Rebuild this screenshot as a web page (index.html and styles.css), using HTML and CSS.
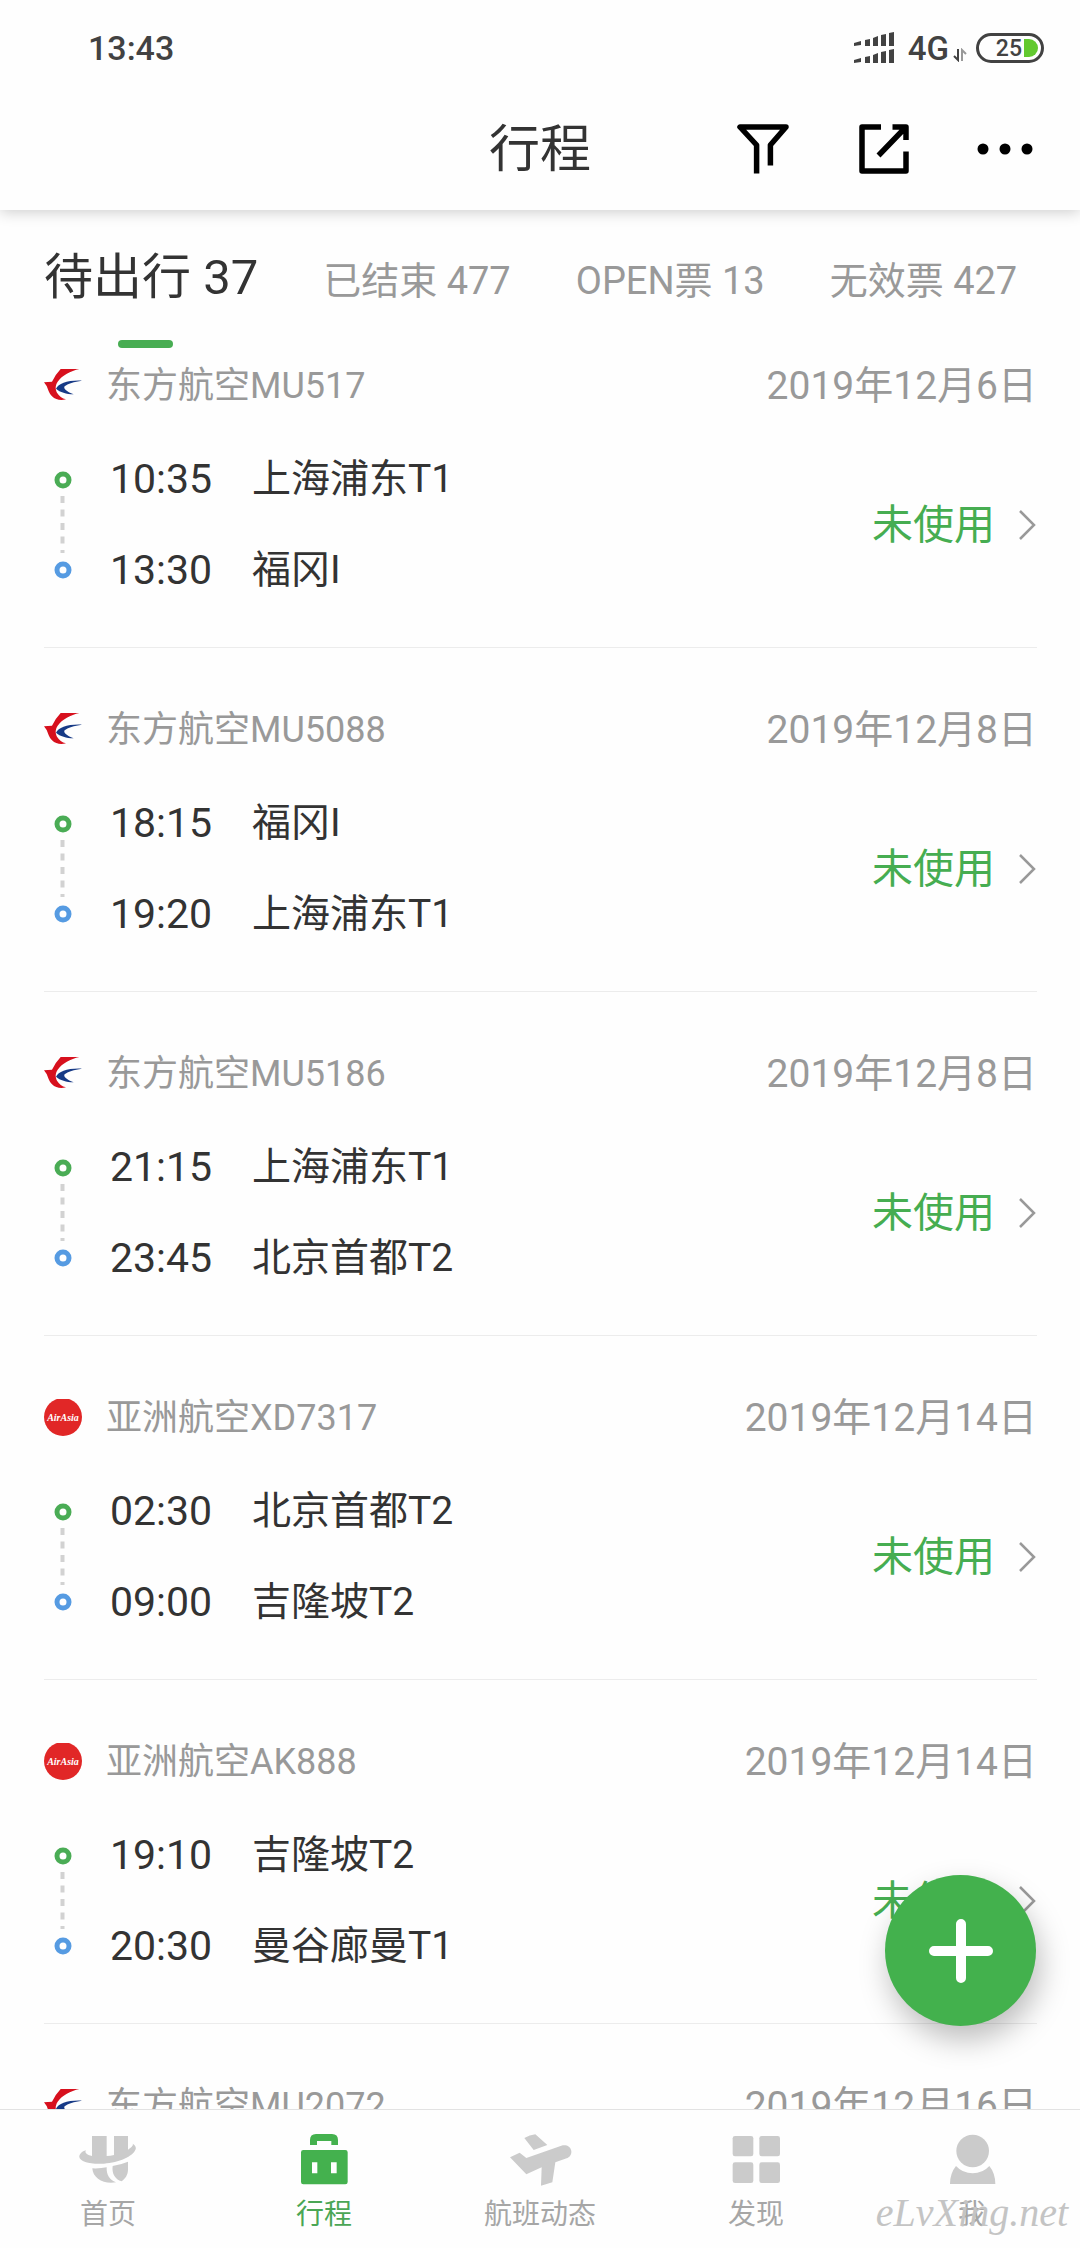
FILE: index.html
```html
<!DOCTYPE html>
<html lang="zh-CN">
<head>
<meta charset="utf-8">
<meta name="viewport" content="width=device-width">
<title>行程</title>
<link rel="stylesheet" href="styles.css">
</head>
<body>
<svg class="defs" aria-hidden="true">
  <symbol id="mu" viewBox="42 51 114 114">
    <path fill="#d7101d" d="M92 57h56C122 63 96 76 83 95c-8 13-7 22-2 33 6 10 15 17 27 20-15 4-31 2-42-9-9-9-12-21-16-31l-8-11 24-2q9-20 26-38z"/>
    <path fill="#173a86" d="M156 92c-24 3-43 9-52 17-5 6 5 16 27 24-22-1-41-6-53-17 8-15 35-26 78-24z"/>
  </symbol>
  <symbol id="airasia" viewBox="0 0 38 38">
    <circle cx="19" cy="18" r="19" fill="#e12727"/>
    <text class="airasia-text" x="19" y="22" text-anchor="middle">AirAsia</text>
  </symbol>
  <symbol id="chevron" viewBox="0 0 18 30">
    <path d="M1 1l14 14L1 29" fill="none" stroke="#999" stroke-width="2.5"/>
  </symbol>
  <symbol id="route" viewBox="0 0 18 108">
    <circle cx="9" cy="9" r="6" fill="#fff" stroke="#4aac55" stroke-width="5"/>
    <path d="M8.500 25v57" stroke="#d2d2d2" stroke-width="4" stroke-dasharray="7 6.500"/>
    <circle cx="9" cy="99" r="6" fill="#fff" stroke="#569be2" stroke-width="5"/>
  </symbol>
</svg>

<div class="statusbar">
  <span class="clock">13:43</span>
  <svg class="signal" width="40" height="32" viewBox="0 0 40 32" fill="#424242">
    <path d="M0 11l7-2v4l-7 1zM11 8l5-1v7h-5zM19 6l5-2v10h-5zM27 3l5-1v12h-5zM35 1l5-1v14h-5z"/>
    <path d="M0 28l7-2v4l-7 1zM11 25l5-1v7h-5zM19 23l5-2v10h-5zM27 20l5-1v12h-5zM35 18l5-1v14h-5z"/>
  </svg>
  <span class="network">4G</span>
  <svg class="updown" width="14" height="14" viewBox="0 0 14 14" fill="none" stroke-width="2">
    <path d="M5 1v11L1 8" stroke="#424242"/><path d="M9 13V2l4 4" stroke="#999"/>
  </svg>
  <span class="battery"><span>25</span><i class="charge"></i></span>
</div>

<header class="header">
  <h1>行程</h1>
  <div class="actions">
    <button aria-label="筛选"><svg width="52" height="50" viewBox="0 0 52 50"><path d="M19.600 49.500V21L3 3h46L33.400 21v20.500" fill="none" stroke="#000" stroke-width="5.500" stroke-linejoin="round"/></svg></button>
    <button aria-label="分享"><svg width="50" height="50" viewBox="0 0 50 50"><path d="M22 3H3v44h44V27.500M33.500 3H47v13M19.500 31.500L46 4" fill="none" stroke="#000" stroke-width="5.500" stroke-linejoin="round"/></svg></button>
    <button aria-label="更多"><svg width="56" height="12" viewBox="0 0 56 12"><circle cx="6" cy="6" r="5.500"/><circle cx="28" cy="6" r="5.500"/><circle cx="50" cy="6" r="5.500"/></svg></button>
  </div>
</header>

<div class="tabs" role="tablist">
  <button class="tab active" role="tab" aria-selected="true">待出行 37</button>
  <button class="tab" role="tab">已结束 477</button>
  <button class="tab" role="tab">OPEN票 13</button>
  <button class="tab" role="tab">无效票 427</button>
</div>

<main class="trips">
  <article class="trip">
    <div class="trip-head"><svg class="logo"><use href="#mu"/></svg><span class="flight">东方航空MU517</span><time class="date">2019年12月6日</time></div>
    <div class="trip-body"><svg class="route"><use href="#route"/></svg>
      <div class="stops"><span class="time">10:35</span><span>上海浦东T1</span><span class="time">13:30</span><span>福冈I</span></div>
      <a class="state" href="#">未使用<svg class="chevron"><use href="#chevron"/></svg></a></div>
  </article>
  <article class="trip">
    <div class="trip-head"><svg class="logo"><use href="#mu"/></svg><span class="flight">东方航空MU5088</span><time class="date">2019年12月8日</time></div>
    <div class="trip-body"><svg class="route"><use href="#route"/></svg>
      <div class="stops"><span class="time">18:15</span><span>福冈I</span><span class="time">19:20</span><span>上海浦东T1</span></div>
      <a class="state" href="#">未使用<svg class="chevron"><use href="#chevron"/></svg></a></div>
  </article>
  <article class="trip">
    <div class="trip-head"><svg class="logo"><use href="#mu"/></svg><span class="flight">东方航空MU5186</span><time class="date">2019年12月8日</time></div>
    <div class="trip-body"><svg class="route"><use href="#route"/></svg>
      <div class="stops"><span class="time">21:15</span><span>上海浦东T1</span><span class="time">23:45</span><span>北京首都T2</span></div>
      <a class="state" href="#">未使用<svg class="chevron"><use href="#chevron"/></svg></a></div>
  </article>
  <article class="trip">
    <div class="trip-head"><svg class="logo"><use href="#airasia"/></svg><span class="flight">亚洲航空XD7317</span><time class="date">2019年12月14日</time></div>
    <div class="trip-body"><svg class="route"><use href="#route"/></svg>
      <div class="stops"><span class="time">02:30</span><span>北京首都T2</span><span class="time">09:00</span><span>吉隆坡T2</span></div>
      <a class="state" href="#">未使用<svg class="chevron"><use href="#chevron"/></svg></a></div>
  </article>
  <article class="trip">
    <div class="trip-head"><svg class="logo"><use href="#airasia"/></svg><span class="flight">亚洲航空AK888</span><time class="date">2019年12月14日</time></div>
    <div class="trip-body"><svg class="route"><use href="#route"/></svg>
      <div class="stops"><span class="time">19:10</span><span>吉隆坡T2</span><span class="time">20:30</span><span>曼谷廊曼T1</span></div>
      <a class="state" href="#">未使用<svg class="chevron"><use href="#chevron"/></svg></a></div>
  </article>
  <article class="trip">
    <div class="trip-head"><svg class="logo"><use href="#mu"/></svg><span class="flight">东方航空MU2072</span><time class="date">2019年12月16日</time></div>
  </article>
</main>

<nav class="nav">
  <button class="add" aria-label="添加行程"><svg width="64" height="64" viewBox="0 0 64 64"><path d="M32 5v54M5 32h54" stroke="#fff" stroke-width="10" stroke-linecap="round"/></svg></button>
  <a href="#"><svg viewBox="0 0 228 198">
    <path d="M66 33h44v60q12 0 22-3V33h42v41q12-7 15-14l-1-4q12 8 9 17c-8 22-50 40-95 43-40 3-72-6-74-20-1-8 8-17 20-20-5 7 2 14 18 17z"/>
    <path d="M67 130q24 1 43-3c-1 22 9 39 28 45-36 7-70-12-71-42zM128 123q27-5 46-13v23c0 17-8 28-19 36-20-6-30-23-27-46z"/></svg>首页</a>
  <a class="current" href="#" aria-current="page"><svg viewBox="0 0 228 198">
    <path d="M72 60V45q0-18 18-18h48q18 0 18 18v15h-20V48H93v12z"/>
    <path fill-rule="evenodd" d="M52 75h126q7 0 7 7v89q0 7-7 7H52q-7 0-7-7V82q0-7 7-7zM78 112v33h16v-33zM135 112v33h17v-33z"/></svg>行程</a>
  <a href="#"><svg viewBox="0 0 228 198">
    <path d="M67 39q16-9 33-11l36 32-41 15zM24 97l29-14 20 16L178 62c14-4 28 2 30 16 1 12-6 19-14 22l-34 12-9 60-34 10 2-55-46 21z"/></svg>航班动态</a>
  <a href="#"><svg viewBox="0 0 228 198">
    <rect x="44" y="33" width="62" height="61" rx="7"/><rect x="124" y="33" width="62" height="61" rx="7"/><rect x="44" y="112" width="62" height="62" rx="7"/><rect x="124" y="112" width="62" height="62" rx="7"/></svg>发现</a>
  <a href="#"><svg viewBox="0 0 228 198">
    <circle cx="116" cy="78" r="49"/><path d="M66 123q20 22 50 22t50-22q18 22 18 54H48q0-32 18-54z"/></svg>我</a>
  <span class="watermark">eLvXing.net</span>
</nav>
</body>
</html>
```
FILE: styles.css
```css
* { box-sizing: border-box; }
body {
  margin: 0;
  height: 100vh;
  display: flex;
  flex-direction: column;
  background: #fefefe;
  color: #333;
  font-family: Roboto, "Noto Sans CJK SC", sans-serif;
}
button { padding: 0; border: 0; background: none; color: inherit; font: inherit; }
a { color: inherit; text-decoration: none; }
svg { flex: none; }
.defs { display: none; }
.airasia-text { font: italic bold 10px "Liberation Serif", serif; fill: #fff; }

.statusbar {
  z-index: 1;
  display: flex;
  align-items: center;
  height: 96px;
  padding: 0 36px 0 88px;
  background: #fefefe;
  color: #424242;
}
.clock { margin-right: auto; font-size: 34px; font-weight: 500; }
.network { margin: 0 4px 0 14px; font-size: 33px; font-weight: 500; }
.updown { margin: 14px 9px 0 0; }
.battery {
  display: flex;
  align-items: center;
  justify-content: flex-end;
  gap: 2px;
  width: 68px;
  height: 30px;
  padding-right: 3px;
  border: 3px solid #424242;
  border-radius: 15px;
  font-size: 23px;
  font-weight: 500;
}
.charge { width: 14px; height: 18px; border-radius: 0 9px 9px 0; background: #62c930; }

.header {
  display: grid;
  grid-template-columns: 1fr auto 1fr;
  align-items: start;
  height: 114px;
  padding: 0 15px;
  box-shadow: 0 2px 14px rgba(0, 0, 0, .2);
}
.header h1 { grid-column: 2; margin: 0; font-size: 51px; font-weight: 400; line-height: 108px; }
.actions { display: flex; justify-content: flex-end; }
.actions button { display: flex; align-items: center; justify-content: center; width: 121px; height: 106px; }

.tabs {
  display: flex;
  align-items: baseline;
  gap: 65px;
  padding: 36px 44px 0;
  font-size: 38px;
  color: #999;
}
.tab { white-space: nowrap; line-height: 64px; }
.tab.active { font-size: 49px; color: #333; }
.tab.active::after {
  content: "";
  display: block;
  width: 55px;
  height: 8px;
  margin: 30px 0 0 74px;
  border-radius: 4px;
  background: #48ad52;
}

.trips { flex: 1; min-height: 0; overflow-y: auto; scrollbar-width: none; padding: 0 43px 0 44px; }
.trip { padding: 58px 0 31px; border-bottom: 1px solid #ececec; }
.trip:first-child { padding-top: 14px; }
.trip-head { display: flex; align-items: center; height: 48px; line-height: 48px; color: #999; }
.logo { width: 38px; height: 38px; margin-right: 24px; }
.flight { flex: 1; font-size: 36px; }
.date { font-size: 39px; }
.trip-body { display: flex; align-items: center; margin-top: 24px; }
.route { width: 18px; height: 108px; margin: 0 38px 0 10px; }
.stops {
  flex: 1;
  display: grid;
  grid-template-columns: 142px 1fr;
  font-size: 39px;
  line-height: 91px;
}
.time { font-size: 41px; }
.state { display: flex; align-items: center; gap: 24px; font-size: 41px; line-height: 48px; color: #46ad51; }
.chevron { width: 18px; height: 30px; }

.nav {
  position: relative;
  display: flex;
  padding-top: 15px;
  border-top: 1px solid #e2e2e2;
  background: #fefefe;
}
.nav a {
  flex: 1;
  display: flex;
  flex-direction: column;
  align-items: center;
  gap: 6px;
  padding-bottom: 15px;
  font-size: 28px;
  line-height: 36px;
  color: #a6a6a6;
}
.nav a svg { width: 76px; height: 66px; fill: #cbcbcb; }
.nav .current { color: #4aa655; }
.nav .current svg { fill: #44b14e; }
.add {
  position: absolute;
  right: 44px;
  bottom: 222px;
  display: flex;
  align-items: center;
  justify-content: center;
  width: 151px;
  height: 151px;
  border-radius: 50%;
  background: #43b14d;
  box-shadow: 4px 14px 30px rgba(0, 0, 0, .26);
}
.watermark {
  position: absolute;
  right: 12px;
  bottom: 12px;
  font: italic 40px/46px "Liberation Serif", serif;
  color: #c4c4c4;
}
```
